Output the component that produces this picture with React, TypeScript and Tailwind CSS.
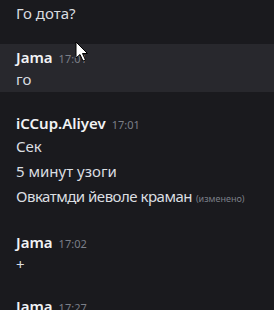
const groups = [
  { user: "Jama", time: "17:02", lines: ["+"] },
  { user: "Jama", time: "17:27", lines: [] as string[] },
];

const Cursor = () => (
  <svg className="absolute left-[75px] top-[41px]" width="14" height="22" viewBox="0 0 14 22">
    <path d="M1 1 L1 17 L5 13.5 L8 20 L10.5 19 L7.5 12.5 L12.5 12.5 Z" fill="#fff" stroke="#000" strokeWidth="1" />
  </svg>
);

export default function App() {
  return (
    <div className="relative w-[274px] h-[310px] overflow-hidden bg-[#1a1a1e] text-[#dbdee1] font-['Noto_Sans',sans-serif]">
      <div className="pl-4 h-[26px] leading-[26px] text-[15px]">Го дота?</div>
      <div className="h-[18px]" />
      <div className="bg-[#28282d] h-[48px] pl-4 pt-[2px]">
        <div className="flex items-baseline gap-[6px] h-[22px] leading-[22px]">
          <span className="text-[15px] font-semibold text-[#f2f3f5]">Jama</span>
          <span className="text-[11px] text-[#7b7f88]">17:01</span>
        </div>
        <div className="text-[15px] leading-[22px]">го</div>
      </div>
      <div className="pl-4 pt-[20px]">
        <div className="flex items-baseline gap-[6px] h-[22px] leading-[22px]">
          <span className="text-[15px] font-semibold text-[#f2f3f5]">iCCup.Aliyev</span>
          <span className="text-[11px] text-[#7b7f88]">17:01</span>
        </div>
        <div className="text-[15px] leading-[25px]">Сек</div>
        <div className="text-[15px] leading-[25px]">5 минут узоги</div>
        <div className="text-[15px] leading-[25px]">
          <span className="tracking-[-0.5px]">Овкатмди йеволе краман</span>{" "}
          <span className="text-[9px] text-[#7b7f88]">(изменено)</span>
        </div>
      </div>
      {groups.map((g, i) => (
        <div key={i} className="pl-4 pt-[20px]">
          <div className="flex items-baseline gap-[6px] h-[22px] leading-[22px]">
            <span className="text-[15px] font-semibold text-[#f2f3f5]">{g.user}</span>
            <span className="text-[11px] text-[#7b7f88]">{g.time}</span>
          </div>
          {g.lines.map((l, j) => (
            <div key={j} className="text-[15px] leading-[22px]">{l}</div>
          ))}
        </div>
      ))}
      <Cursor />
    </div>
  );
}
